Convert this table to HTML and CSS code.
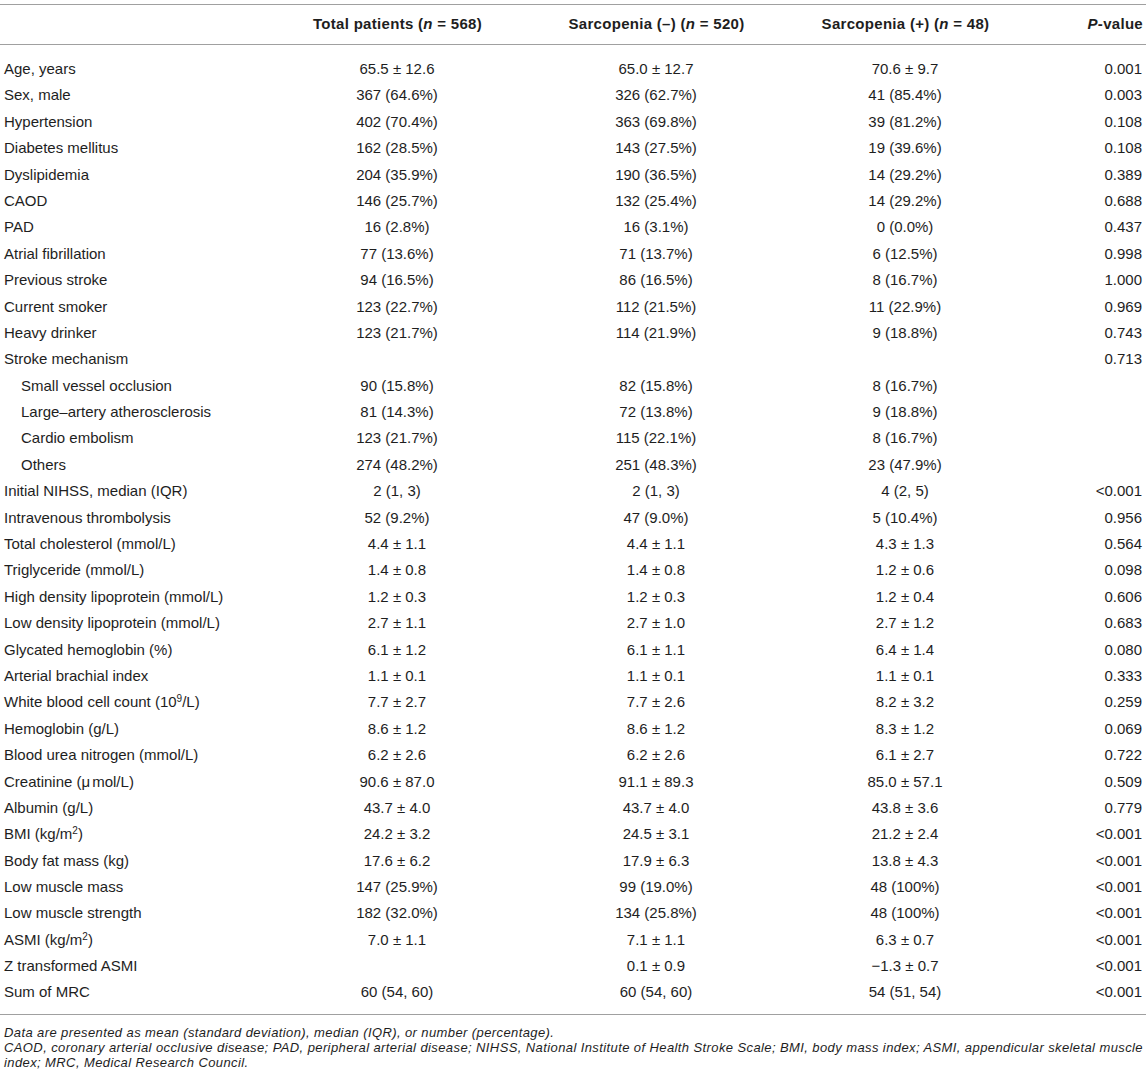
FILE: index.html
```html
<!DOCTYPE html>
<html>
<head>
<meta charset="utf-8">
<link rel="stylesheet" href="styles.css">
</head>
<body>
<div class="wrap">
<table class="tbl">
<colgroup>
<col class="c1"><col class="c2"><col class="c3"><col class="c4"><col class="c5">
</colgroup>
<thead>
<tr><th></th><th>Total patients (<i>n</i> = 568)</th><th>Sarcopenia (–) (<i>n</i> = 520)</th><th>Sarcopenia (+) (<i>n</i> = 48)</th><th class="pv"><i>P</i>-value</th></tr>
</thead>
<tbody>
<tr class="first"><td>Age, years</td><td>65.5 ± 12.6</td><td>65.0 ± 12.7</td><td>70.6 ± 9.7</td><td class="pv">0.001</td></tr>
<tr><td>Sex, male</td><td>367 (64.6%)</td><td>326 (62.7%)</td><td>41 (85.4%)</td><td class="pv">0.003</td></tr>
<tr><td>Hypertension</td><td>402 (70.4%)</td><td>363 (69.8%)</td><td>39 (81.2%)</td><td class="pv">0.108</td></tr>
<tr><td>Diabetes mellitus</td><td>162 (28.5%)</td><td>143 (27.5%)</td><td>19 (39.6%)</td><td class="pv">0.108</td></tr>
<tr><td>Dyslipidemia</td><td>204 (35.9%)</td><td>190 (36.5%)</td><td>14 (29.2%)</td><td class="pv">0.389</td></tr>
<tr><td>CAOD</td><td>146 (25.7%)</td><td>132 (25.4%)</td><td>14 (29.2%)</td><td class="pv">0.688</td></tr>
<tr><td>PAD</td><td>16 (2.8%)</td><td>16 (3.1%)</td><td>0 (0.0%)</td><td class="pv">0.437</td></tr>
<tr><td>Atrial fibrillation</td><td>77 (13.6%)</td><td>71 (13.7%)</td><td>6 (12.5%)</td><td class="pv">0.998</td></tr>
<tr><td>Previous stroke</td><td>94 (16.5%)</td><td>86 (16.5%)</td><td>8 (16.7%)</td><td class="pv">1.000</td></tr>
<tr><td>Current smoker</td><td>123 (22.7%)</td><td>112 (21.5%)</td><td>11 (22.9%)</td><td class="pv">0.969</td></tr>
<tr><td>Heavy drinker</td><td>123 (21.7%)</td><td>114 (21.9%)</td><td>9 (18.8%)</td><td class="pv">0.743</td></tr>
<tr><td>Stroke mechanism</td><td></td><td></td><td></td><td class="pv">0.713</td></tr>
<tr><td class="sub">Small vessel occlusion</td><td>90 (15.8%)</td><td>82 (15.8%)</td><td>8 (16.7%)</td><td class="pv"></td></tr>
<tr><td class="sub">Large–artery atherosclerosis</td><td>81 (14.3%)</td><td>72 (13.8%)</td><td>9 (18.8%)</td><td class="pv"></td></tr>
<tr><td class="sub">Cardio embolism</td><td>123 (21.7%)</td><td>115 (22.1%)</td><td>8 (16.7%)</td><td class="pv"></td></tr>
<tr><td class="sub">Others</td><td>274 (48.2%)</td><td>251 (48.3%)</td><td>23 (47.9%)</td><td class="pv"></td></tr>
<tr><td>Initial NIHSS, median (IQR)</td><td>2 (1, 3)</td><td>2 (1, 3)</td><td>4 (2, 5)</td><td class="pv">&lt;0.001</td></tr>
<tr><td>Intravenous thrombolysis</td><td>52 (9.2%)</td><td>47 (9.0%)</td><td>5 (10.4%)</td><td class="pv">0.956</td></tr>
<tr><td>Total cholesterol (mmol/L)</td><td>4.4 ± 1.1</td><td>4.4 ± 1.1</td><td>4.3 ± 1.3</td><td class="pv">0.564</td></tr>
<tr><td>Triglyceride (mmol/L)</td><td>1.4 ± 0.8</td><td>1.4 ± 0.8</td><td>1.2 ± 0.6</td><td class="pv">0.098</td></tr>
<tr><td>High density lipoprotein (mmol/L)</td><td>1.2 ± 0.3</td><td>1.2 ± 0.3</td><td>1.2 ± 0.4</td><td class="pv">0.606</td></tr>
<tr><td>Low density lipoprotein (mmol/L)</td><td>2.7 ± 1.1</td><td>2.7 ± 1.0</td><td>2.7 ± 1.2</td><td class="pv">0.683</td></tr>
<tr><td>Glycated hemoglobin (%)</td><td>6.1 ± 1.2</td><td>6.1 ± 1.1</td><td>6.4 ± 1.4</td><td class="pv">0.080</td></tr>
<tr><td>Arterial brachial index</td><td>1.1 ± 0.1</td><td>1.1 ± 0.1</td><td>1.1 ± 0.1</td><td class="pv">0.333</td></tr>
<tr><td>White blood cell count (10<sup>9</sup>/L)</td><td>7.7 ± 2.7</td><td>7.7 ± 2.6</td><td>8.2 ± 3.2</td><td class="pv">0.259</td></tr>
<tr><td>Hemoglobin (g/L)</td><td>8.6 ± 1.2</td><td>8.6 ± 1.2</td><td>8.3 ± 1.2</td><td class="pv">0.069</td></tr>
<tr><td>Blood urea nitrogen (mmol/L)</td><td>6.2 ± 2.6</td><td>6.2 ± 2.6</td><td>6.1 ± 2.7</td><td class="pv">0.722</td></tr>
<tr><td>Creatinine (<span class="mu">μ</span>mol/L)</td><td>90.6 ± 87.0</td><td>91.1 ± 89.3</td><td>85.0 ± 57.1</td><td class="pv">0.509</td></tr>
<tr><td>Albumin (g/L)</td><td>43.7 ± 4.0</td><td>43.7 ± 4.0</td><td>43.8 ± 3.6</td><td class="pv">0.779</td></tr>
<tr><td>BMI (kg/m<sup>2</sup>)</td><td>24.2 ± 3.2</td><td>24.5 ± 3.1</td><td>21.2 ± 2.4</td><td class="pv">&lt;0.001</td></tr>
<tr><td>Body fat mass (kg)</td><td>17.6 ± 6.2</td><td>17.9 ± 6.3</td><td>13.8 ± 4.3</td><td class="pv">&lt;0.001</td></tr>
<tr><td>Low muscle mass</td><td>147 (25.9%)</td><td>99 (19.0%)</td><td>48 (100%)</td><td class="pv">&lt;0.001</td></tr>
<tr><td>Low muscle strength</td><td>182 (32.0%)</td><td>134 (25.8%)</td><td>48 (100%)</td><td class="pv">&lt;0.001</td></tr>
<tr><td>ASMI (kg/m<sup>2</sup>)</td><td>7.0 ± 1.1</td><td>7.1 ± 1.1</td><td>6.3 ± 0.7</td><td class="pv">&lt;0.001</td></tr>
<tr><td>Z transformed ASMI</td><td></td><td>0.1 ± 0.9</td><td>−1.3 ± 0.7</td><td class="pv">&lt;0.001</td></tr>
<tr class="last"><td>Sum of MRC</td><td>60 (54, 60)</td><td>60 (54, 60)</td><td>54 (51, 54)</td><td class="pv">&lt;0.001</td></tr>
</tbody>
</table>
<div class="notes">
<p>Data are presented as mean (standard deviation), median (IQR), or number (percentage).</p>
<p class="just">CAOD, coronary arterial occlusive disease; PAD, peripheral arterial disease; NIHSS, National Institute of Health Stroke Scale; BMI, body mass index; ASMI, appendicular skeletal muscle index; MRC, Medical Research Council.</p>
</div>
</div>
</body>
</html>
```
FILE: styles.css
```css
html, body {
  margin: 0;
  padding: 0;
  background: #fff;
}
.wrap {
  padding-top: 4px;
  font-family: "Liberation Sans", Arial, sans-serif;
  color: #1e1e1e;
}
.tbl {
  width: 1146px;
  border-collapse: collapse;
  table-layout: fixed;
  font-size: 15px;
}
.c1 { width: 267px; }
.c2 { width: 260px; }
.c3 { width: 258px; }
.c4 { width: 240px; }
.c5 { width: 121px; }
.tbl thead tr {
  border-top: 1px solid #a0a0a0;
  border-bottom: 1px solid #a0a0a0;
}
.tbl th {
  box-sizing: border-box;
  height: 40px;
  padding: 0 3px 2px 4px;
  font-weight: bold;
  letter-spacing: 0.3px;
  text-align: center;
  white-space: nowrap;
}
.tbl td {
  box-sizing: border-box;
  height: 26.4px;
  padding: 0 4px;
  text-align: center;
  white-space: nowrap;
  line-height: 17px;
}
.tbl td:first-child {
  text-align: left;
}
.tbl .pv {
  text-align: right;
}
.tbl td.sub {
  padding-left: 21px;
}
.tbl tr.first td {
  height: 37.2px;
  padding-top: 10.8px;
}
.tbl tr.last {
  border-bottom: 1px solid #a0a0a0;
}
.tbl tr.last td {
  height: 35.2px;
  padding-bottom: 8.8px;
}
.tbl sup {
  font-size: 10px;
  line-height: 0;
  vertical-align: 5px;
}
.mu {
  margin-right: 2px;
}
.notes {
  padding: 10px 3px 0 4px;
  font-size: 13px;
  font-style: italic;
  letter-spacing: 0.4px;
  line-height: 15px;
}
.notes p {
  margin: 0;
}
.notes .just {
  text-align: justify;
}
```
